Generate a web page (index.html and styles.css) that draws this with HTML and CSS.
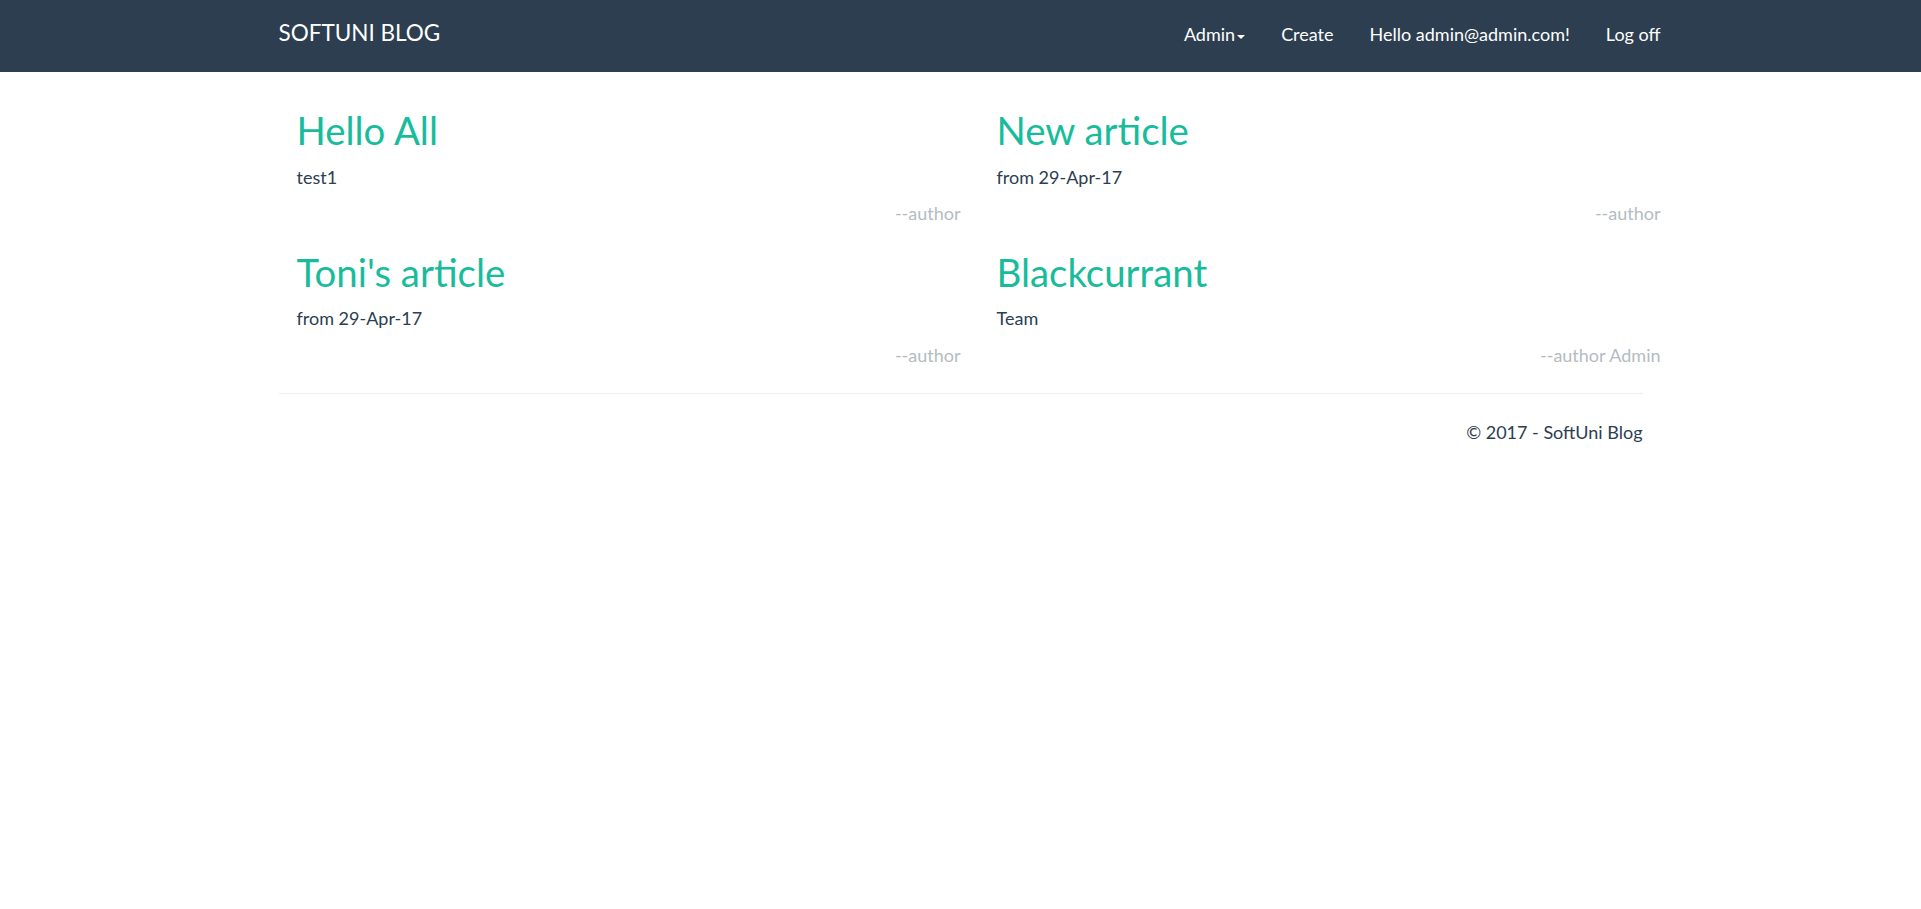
FILE: index.html
```html
<!DOCTYPE html>
<html lang="en">
<head>
<meta charset="utf-8">
<title>SoftUni Blog</title>
<link rel="stylesheet" href="styles.css">
</head>
<body>
<nav class="navbar">
  <div class="container nav-inner">
    <a class="brand" href="#">SOFTUNI BLOG</a>
    <ul class="nav-links">
      <li><a href="#">Admin<span class="caret"></span></a></li>
      <li><a href="#">Create</a></li>
      <li><a href="#">Hello admin@admin.com!</a></li>
      <li><a href="#">Log off</a></li>
    </ul>
  </div>
</nav>
<main class="container body-content">
  <div class="articles">
    <article class="article">
      <h2><a href="#">Hello All</a></h2>
      <p>test1</p>
      <div class="author">--author</div>
    </article>
    <article class="article">
      <h2><a href="#">New article</a></h2>
      <p>from 29-Apr-17</p>
      <div class="author">--author</div>
    </article>
    <article class="article">
      <h2><a href="#">Toni's article</a></h2>
      <p>from 29-Apr-17</p>
      <div class="author">--author</div>
    </article>
    <article class="article">
      <h2><a href="#">Blackcurrant</a></h2>
      <p>Team</p>
      <div class="author">--author Admin</div>
    </article>
  </div>
  <hr class="divider">
  <footer class="footer">
    <p>&copy; 2017 - SoftUni Blog</p>
  </footer>
</main>
</body>
</html>
```
FILE: styles.css
```css
* { box-sizing: border-box; }
html, body { margin: 0; padding: 0; }
body {
  font-family: Lato, "Open Sans", "Liberation Sans", sans-serif;
  font-size: 18px;
  line-height: 25.7px;
  color: #2c3e50;
  background: #fff;
}
a { text-decoration: none; }
.container {
  width: 1364px;
  margin: 0 auto;
}
.navbar {
  background: #2c3e50;
  height: 72px;
}
.nav-inner {
  display: flex;
  align-items: center;
  justify-content: space-between;
  height: 72px;
}
.brand {
  color: #fff;
  font-size: 22.5px;
  line-height: 25px;
  margin-top: -7px;
}
.nav-links {
  list-style: none;
  margin: 0 -36px 0 0;
  padding: 0;
  display: flex;
}
.nav-links a {
  display: block;
  color: #fff;
  padding: 0 18px;
  line-height: 25.7px;
  margin-top: -2px;
}
.caret {
  display: inline-block;
  width: 0;
  height: 0;
  margin-left: 2px;
  vertical-align: middle;
  border-top: 4px solid #fff;
  border-left: 4px solid transparent;
  border-right: 4px solid transparent;
}
.body-content {
  padding-top: 13px;
}
.articles {
  display: grid;
  grid-template-columns: 700px 700px;
  width: 1400px;
}
.article {
  padding: 0 18px;
}
.article h2 {
  font-size: 38.4px;
  font-weight: 400;
  line-height: 42.24px;
  margin: 24px 0 13.6px;
}
.article h2 a { color: #18bc9c; }
.article p { margin: 0 0 10.4px; }
.author {
  text-align: right;
  color: #b4bcc2;
}
.divider {
  border: 0;
  border-top: 1px solid #ecf0f1;
  margin: 24.5px 0 26.5px;
}
.footer p {
  margin: 0;
  text-align: right;
}
```
